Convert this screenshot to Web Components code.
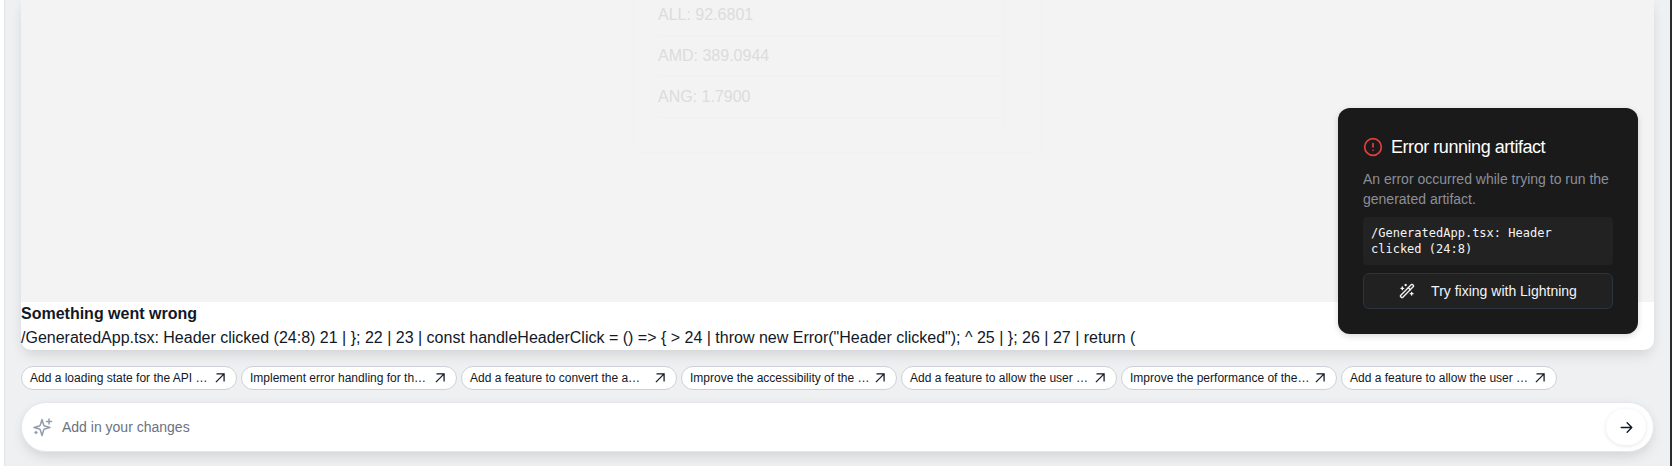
<!DOCTYPE html>
<html>
<head>
<meta charset="utf-8">
<style>
  html, body { margin: 0; height: 466px; overflow: hidden; }
  body { font-family: "Liberation Sans", Arial, sans-serif; background: #fff; }
</style>
</head>
<body>
<app-shell>
  <preview-panel>
    <rate-list></rate-list>
    <error-banner slot="banner"></error-banner>
  </preview-panel>
  <suggestion-row>
    <suggestion-chip>Add a loading state for the API …</suggestion-chip>
    <suggestion-chip>Implement error handling for th…</suggestion-chip>
    <suggestion-chip>Add a feature to convert the a…</suggestion-chip>
    <suggestion-chip>Improve the accessibility of the …</suggestion-chip>
    <suggestion-chip>Add a feature to allow the user …</suggestion-chip>
    <suggestion-chip>Improve the performance of the…</suggestion-chip>
    <suggestion-chip>Add a feature to allow the user …</suggestion-chip>
  </suggestion-row>
  <prompt-box></prompt-box>
</app-shell>
<error-toast></error-toast>

<script>
class AppShell extends HTMLElement {
  constructor() {
    super();
    this.attachShadow({ mode: "open" }).innerHTML = `
      <style>
        :host { display: block; height: 466px; box-sizing: border-box; margin-left: 4px;
          padding: 0 16px 0 16px; background: #eff0f2; border-left: 1px solid #e2e4e8;
          border-right: 2px solid #2b2b2b; overflow: hidden; }
      </style>
      <slot></slot>`;
  }
}

class PreviewPanel extends HTMLElement {
  constructor() {
    super();
    this.attachShadow({ mode: "open" }).innerHTML = `
      <style>
        :host { display: block; background: #fff; border-radius: 0 0 10px 10px;
          box-shadow: 0 8px 14px -3px rgba(0,0,0,.1), 0 0 12px rgba(0,0,0,.04); }
        .stage { height: 302px; background: #f3f3f3; overflow: hidden; }
      </style>
      <div class="stage"><slot></slot></div>
      <slot name="banner"></slot>`;
  }
}

class RateList extends HTMLElement {
  constructor() {
    super();
    this.attachShadow({ mode: "open" }).innerHTML = `
      <style>
        :host { display: block; width: 409px; height: 153px; box-sizing: border-box; margin-left: 612px;
          padding-left: 24px; border: 1px solid #f1f1f1; border-top: 0; border-radius: 0 0 8px 8px; }
        .wrap { display: flex; height: 127px; }
        .rows { width: 345px; }
        .row { height: 40px; border-bottom: 1px solid #f0f0f0; font-size: 16px; color: #dcdcdc; line-height: 40px; }
        .row:first-child { height: 35px; line-height: 30px; }
        .track { width: 14px; border: solid #f1f1f1; border-width: 0 1px; }
      </style>
      <div class="wrap">
        <div class="rows">
          <div class="row">ALL: 92.6801</div>
          <div class="row">AMD: 389.0944</div>
          <div class="row">ANG: 1.7900</div>
        </div>
        <div class="track"></div>
      </div>`;
  }
}

class ErrorBanner extends HTMLElement {
  constructor() {
    super();
    this.attachShadow({ mode: "open" }).innerHTML = `
      <style>
        :host { display: block; height: 48px; color: #111827; font-size: 16px; line-height: 24px; }
        b { display: block; font-weight: 700; }
      </style>
      <b>Something went wrong</b>
      <div>/GeneratedApp.tsx: Header clicked (24:8) 21 | }; 22 | 23 | const handleHeaderClick = () =&gt; { &gt; 24 | throw new Error("Header clicked"); ^ 25 | }; 26 | 27 | return (</div>`;
  }
}

class SuggestionRow extends HTMLElement {
  constructor() {
    super();
    this.attachShadow({ mode: "open" }).innerHTML = `
      <style>
        :host { display: flex; gap: 4px; padding-top: 16px; }
      </style>
      <slot></slot>`;
  }
}

class SuggestionChip extends HTMLElement {
  constructor() {
    super();
    this.attachShadow({ mode: "open" }).innerHTML = `
      <style>
        :host { display: flex; align-items: center; justify-content: space-between; box-sizing: border-box;
          flex: 0 0 216px; height: 24px; padding: 0 9.5px 0 8px; background: #fff; border: 1px solid #ccd0d8;
          border-radius: 12px; font-size: 12px; color: #111827; white-space: nowrap; }
        svg { width: 14px; height: 14px; flex: none; }
      </style>
      <slot></slot>
      <svg viewBox="0 0 24 24" fill="none" stroke="#111827" stroke-width="2.2">
        <path d="M5 19 19 5M6 5h13v13"/>
      </svg>`;
  }
}

class PromptBox extends HTMLElement {
  constructor() {
    super();
    this.attachShadow({ mode: "open" }).innerHTML = `
      <style>
        :host { display: flex; align-items: center; box-sizing: border-box; height: 50px; margin-top: 12px;
          padding: 0 6px 0 11px; background: #fff; border: 1px solid #e5e7eb; border-radius: 25px;
          box-shadow: 0 8px 14px -3px rgba(0,0,0,.1), 0 0 10px rgba(0,0,0,.04); }
        .spark { width: 20px; height: 20px; flex: none; }
        span { flex: 1; margin-left: 9px; font-size: 14px; color: #6b7280; }
        button { width: 40px; height: 36px; padding: 0; display: flex; align-items: center; justify-content: center;
          background: #fff; border: 0; border-radius: 18px; box-shadow: 0 1px 4px rgba(0,0,0,.1); margin-right: 1px; }
        button svg { width: 15px; height: 15px; }
      </style>
      <svg class="spark" viewBox="0 0 20 20" fill="none" stroke="#949dae" stroke-width="1.5" stroke-linejoin="round" stroke-linecap="round">
        <path d="M9 2.500 10.700 8a1.500 1.500 0 0 0 1 1L17 10.500l-5.300 1.500a1.500 1.500 0 0 0-1 1L9 18.500 7.300 13a1.500 1.500 0 0 0-1-1L1 10.500l5.300-1.500a1.500 1.500 0 0 0 1-1z"/>
        <path d="M16 2v5M13.500 4.500h5M3 14.500v2M2 15.500h2"/>
      </svg>
      <span>Add in your changes</span>
      <button aria-label="Send">
        <svg viewBox="0 0 24 24" fill="none" stroke="#111827" stroke-width="2.2" stroke-linecap="round" stroke-linejoin="round">
          <path d="M3.500 12h17M13 4.500l7.500 7.500-7.500 7.500"/>
        </svg>
      </button>`;
  }
}

class ErrorToast extends HTMLElement {
  constructor() {
    super();
    this.attachShadow({ mode: "open" }).innerHTML = `
      <style>
        :host { position: absolute; left: 1338px; top: 108px; width: 300px; height: 226px; box-sizing: border-box;
          padding: 25px; background: #1a1a1a; border-radius: 12px; box-shadow: 0 2px 6px rgba(0,0,0,.15);
          color: #fff; display: flex; flex-direction: column; }
        .head { display: flex; align-items: center; gap: 8px; font-size: 18px; line-height: 28px; letter-spacing: -.45px; }
        .head svg { width: 20px; height: 20px; flex: none; }
        p { margin: 8px 0 0; font-size: 14px; line-height: 20px; color: #8b8f98; }
        code { display: block; margin-top: 8px; padding: 8px; height: 48px; box-sizing: border-box;
          background: #222; border-radius: 4px; font: 12px/16px "DejaVu Sans Mono", monospace; color: #f3f4f6; }
        button { margin-top: 8px; height: 36px; display: flex; align-items: center; justify-content: center; gap: 16px;
          background: #212121; border: 1px solid #2c3440; border-radius: 6px; color: #f3f4f6;
          font: 14px "Liberation Sans", Arial, sans-serif; padding: 0; }
        button svg { width: 16px; height: 16px; }
      </style>
      <div class="head">
        <svg viewBox="0 0 24 24" fill="none" stroke="#e53e3e" stroke-width="2" stroke-linecap="round">
          <circle cx="12" cy="12" r="10"/><path d="M12 8v4M12 16h.01"/>
        </svg>
        Error running artifact
      </div>
      <p>An error occurred while trying to run the generated artifact.</p>
      <code>/GeneratedApp.tsx: Header clicked (24:8)</code>
      <button>
        <svg viewBox="0 0 24 24" fill="none" stroke="#f3f4f6" stroke-width="2" stroke-linecap="round" stroke-linejoin="round">
          <path d="m21.640 3.640-1.280-1.280a1.210 1.210 0 0 0-1.720 0L2.360 18.640a1.210 1.210 0 0 0 0 1.720l1.280 1.280a1.200 1.200 0 0 0 1.720 0L21.640 5.360a1.200 1.200 0 0 0 0-1.720"/>
          <path d="m14 7 3 3M5 6v4M19 14v4M10 2v2M7 8H3M21 16h-4M11 3H9"/>
        </svg>
        Try fixing with Lightning
      </button>`;
  }
}

customElements.define("app-shell", AppShell);
customElements.define("preview-panel", PreviewPanel);
customElements.define("rate-list", RateList);
customElements.define("error-banner", ErrorBanner);
customElements.define("suggestion-row", SuggestionRow);
customElements.define("suggestion-chip", SuggestionChip);
customElements.define("prompt-box", PromptBox);
customElements.define("error-toast", ErrorToast);
</script>
</body>
</html>
